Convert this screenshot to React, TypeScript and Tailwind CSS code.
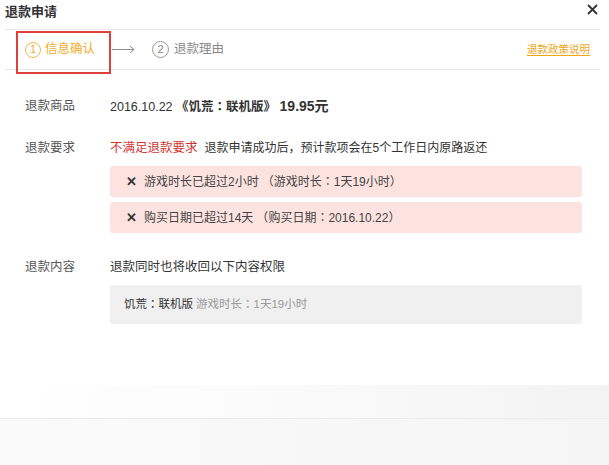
import React from 'react';

const font = { fontFamily: '"Liberation Sans", "Noto Sans CJK SC", sans-serif' };

// centred full-width colon, as in the original
function C() {
  return <span style={{ fontFamily: '"Noto Sans CJK TC", sans-serif' }}>：</span>;
}

function Row({ label, children }: { label: string; children: React.ReactNode }) {
  return (
    <div className="flex">
      <div className="w-[85px] shrink-0 text-[12.5px] leading-5 text-[#555]">{label}</div>
      <div className="flex-1">{children}</div>
    </div>
  );
}

function Failed({ text, note, value }: { text: string; note: string; value: string }) {
  return (
    <div className="h-[31px] flex items-center pl-4 rounded-[3px] bg-[#fde3df] text-[12px] text-[#444]">
      <span className="mr-[7px] font-bold text-[13px] text-[#333]">✕</span>
      <span>{text}</span>
      <span className="ml-[3px]">（{note}<C />{value}）</span>
    </div>
  );
}

export default function App() {
  return (
    <div className="w-[609px] h-[465px] flex flex-col bg-white relative overflow-hidden" style={font}>
      {/* header */}
      <div className="h-[29px] flex items-center justify-between pl-[5px] pr-[11px]">
        <span className="text-[13px] font-bold text-[#333] -mt-[5px]">退款申请</span>
        <svg width="11" height="11" viewBox="0 0 11 11" className="-mt-[10px]">
          <path d="M1 1L10 10M10 1L1 10" stroke="#333" strokeWidth="1.8" />
        </svg>
      </div>

      {/* steps */}
      <div className="mx-[5px] w-[595px] h-[41px] flex items-center border-y border-[#e8e8e8] pl-[20px] pr-[10px]">
        <div className="flex items-center text-[#f2ad2a]">
          <span className="w-[16px] h-[16px] rounded-full border border-[#f2b74a] flex items-center justify-center text-[11px] leading-none">1</span>
          <span className="ml-[4px] text-[12.5px]">信息确认</span>
        </div>
        <svg width="23" height="9" viewBox="0 0 23 9" className="ml-[17px]">
          <path d="M0 4.5H22M18 1L22 4.5L18 8" stroke="#888" strokeWidth="1" fill="none" />
        </svg>
        <div className="ml-[17px] flex items-center text-[#888]">
          <span className="w-[17px] h-[17px] rounded-full border border-[#999] flex items-center justify-center text-[11px] leading-none">2</span>
          <span className="ml-[5px] text-[12.5px]">退款理由</span>
        </div>
        <a className="ml-auto text-[10.5px] text-[#efa514] underline underline-offset-2">退款政策说明</a>
      </div>

      {/* content */}
      <div className="flex-1 pl-[25px] pr-[27px] pt-[26px]">
        <Row label="退款商品">
          <div className="text-[12.5px] leading-5 text-[#333]">
            2016.10.22 <span className="font-bold">《饥荒<C />联机版》</span>{' '}
            <span className="font-bold text-[14px]">19.95元</span>
          </div>
        </Row>

        <div className="mt-[21px]">
          <Row label="退款要求">
            <div className="text-[12px] leading-5 text-[#333]">
              <span className="text-[12.5px] text-[#d2352f]">不满足退款要求</span>
              <span className="ml-[7px]">退款申请成功后，预计款项会在5个工作日内原路返还</span>
            </div>
            <div className="mt-[8px] flex flex-col gap-[5px]">
              <Failed text="游戏时长已超过2小时" note="游戏时长" value="1天19小时" />
              <Failed text="购买日期已超过14天" note="购买日期" value="2016.10.22" />
            </div>
          </Row>
        </div>

        <div className="mt-[24px]">
          <Row label="退款内容">
            <div className="text-[12.5px] leading-5 text-[#333]">退款同时也将收回以下内容权限</div>
            <div className="mt-[8px] h-[39px] flex items-center pl-[14px] rounded-[3px] bg-[#f0f0f0] text-[11.5px]">
              <span className="text-[#333]">饥荒<C />联机版</span>
              <span className="ml-[3px] text-[#9a9a9a]">游戏时长<C />1天19小时</span>
            </div>
          </Row>
        </div>
      </div>

      {/* footer */}
      <div className="h-[80px] flex flex-col">
        <div className="h-[33px] bg-gradient-to-r from-white via-[#fafafa] to-[#f3f3f3]" />
        <div className="flex-1 border-t border-[#ececec] bg-gradient-to-r from-[#fafafa] to-[#f5f5f5]" />
      </div>

      {/* annotation box */}
      <div className="absolute left-[16px] top-[31px] w-[95px] h-[43px] border-2 border-[#e0403c] pointer-events-none" />
    </div>
  );
}
